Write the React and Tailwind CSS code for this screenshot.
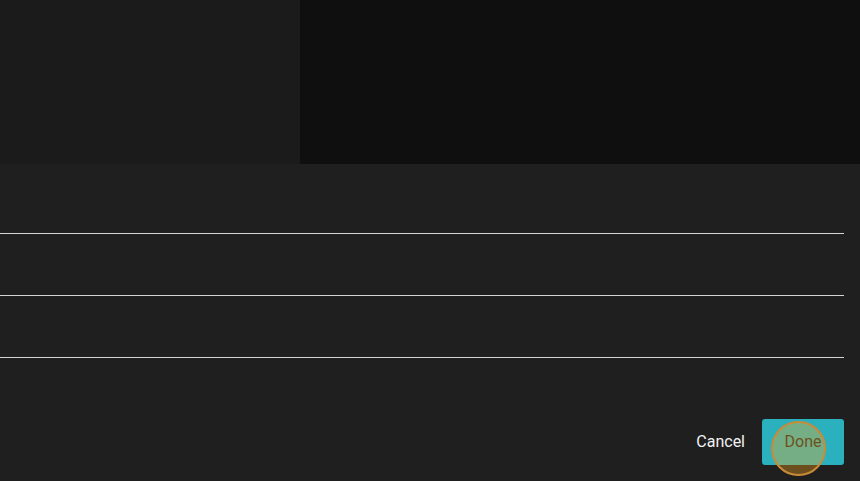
import React from "react";

export default function App() {
  const rows = [0, 1, 2];
  return (
    <div
      className="w-[860px] h-[481px] flex flex-col overflow-hidden bg-[#1f1f1f]"
      style={{ fontFamily: "Roboto, 'Liberation Sans', sans-serif" }}
    >
      {/* top preview area */}
      <div className="h-[164px] flex shrink-0">
        <div className="w-[300px] bg-[#1b1b1b]" />
        <div className="flex-1 bg-[#0f0f0f]" />
      </div>

      {/* form panel */}
      <div className="flex-1 flex flex-col bg-[#1f1f1f] pr-4">
        <div className="flex flex-col">
          {rows.map((r) => (
            <div key={r} className="h-[62px] border-b border-[#d4d4d4] first:h-[70px]" />
          ))}
        </div>

        <div className="flex-1 flex items-end justify-end gap-[17px] pb-4">
          <button className="h-[46px] px-0 text-[16px] text-[#f2f2f2]">Cancel</button>
          <div className="relative">
            <button className="w-[82px] h-[46px] rounded-[3px] bg-[#2bb1bd] text-[16px] text-[#1f1f1f]">
              Done
            </button>
            <span className="absolute left-[9px] top-[2px] w-[55px] h-[55px] rounded-full border-2 border-[#c98b38] bg-[#ffa91e]/35 pointer-events-none" />
          </div>
        </div>
      </div>
    </div>
  );
}
